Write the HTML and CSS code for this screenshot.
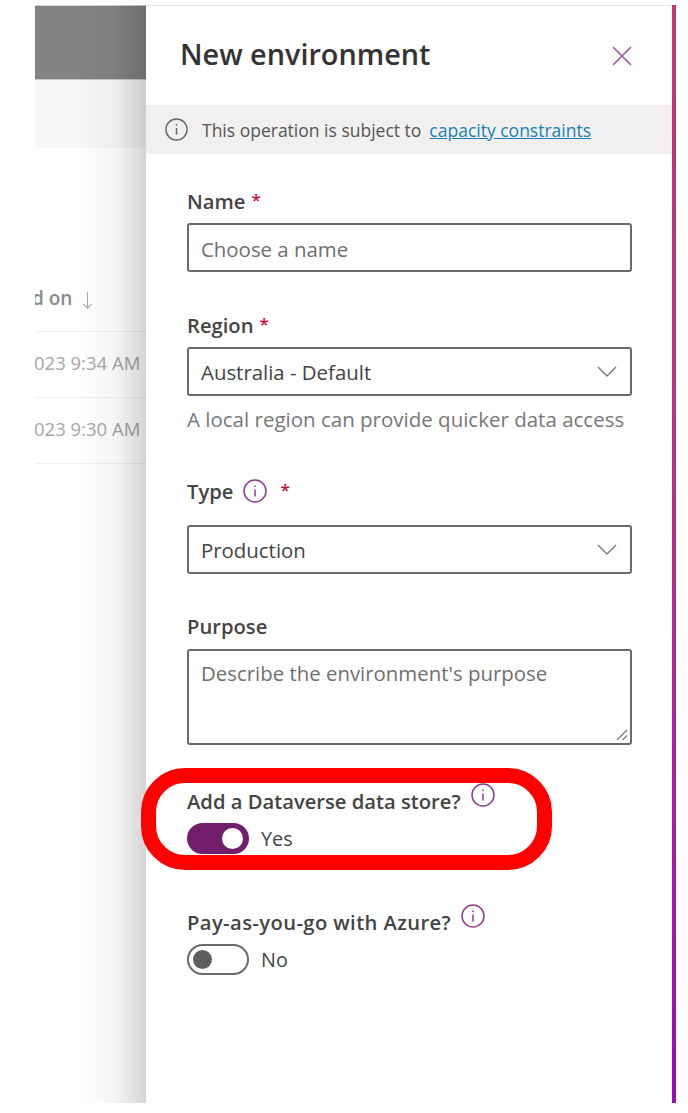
FILE: index.html
```html
<!DOCTYPE html>
<html lang="en">
<head>
<meta charset="utf-8">
<title>New environment</title>
<link rel="stylesheet" href="styles.css">
</head>
<body>
<div class="shot">
  <div class="backdrop">
    <div class="bd-header"></div>
    <div class="bd-band"></div>
    <div class="bd-table">
      <div class="bd-head"><span class="clip-text">d on</span><svg class="arrow" viewBox="0 0 12 20"><path d="M6 1V19M1.5 14.5 6 19 10.5 14.5"/></svg></div>
      <div class="bd-row"><span class="clip-text">023 9:34 AM</span></div>
      <div class="bd-row"><span class="clip-text">023 9:30 AM</span></div>
    </div>
    <div class="bd-shade"></div>
  </div>
  <main class="panel">
    <header class="panel-head">
      <h1 class="title">New environment</h1>
      <svg class="close" viewBox="0 0 20 20" aria-label="Close"><path d="M1 1 19 19M19 1 1 19"/></svg>
    </header>
    <div class="notice">
      <svg class="info info-notice" viewBox="0 0 24 24"><circle cx="12" cy="12" r="11"/><path d="M12 10.5v7M12 6.5v1.6"/></svg>
      <span>This operation is subject to</span>
      <a class="link" href="#">capacity constraints</a>
    </div>
    <form class="form">
      <div class="field field-name">
        <label class="label">Name <span class="req">*</span></label>
        <div class="input placeholder">Choose a name</div>
      </div>
      <div class="field field-region">
        <label class="label">Region <span class="req">*</span></label>
        <div class="input select">Australia - Default
          <svg class="chev" viewBox="0 0 20 11"><path d="M1 1 10 10 19 1"/></svg>
        </div>
        <p class="hint">A local region can provide quicker data access</p>
      </div>
      <div class="field field-type">
        <label class="label label-icon">Type
          <svg class="info info-purple" viewBox="0 0 24 24"><circle cx="12" cy="12" r="11"/><path d="M12 10.5v7M12 6.5v1.6"/></svg>
          <span class="req req-gap">*</span></label>
        <div class="input select">Production
          <svg class="chev" viewBox="0 0 20 11"><path d="M1 1 10 10 19 1"/></svg>
        </div>
      </div>
      <div class="field field-purpose">
        <label class="label">Purpose</label>
        <div class="input textarea placeholder">Describe the environment's purpose
          <svg class="grip" viewBox="0 0 12 12"><path d="M1 11 11 1M6.5 11 11 6.5"/></svg>
        </div>
      </div>
      <div class="field field-store">
        <label class="label label-icon">Add a Dataverse data store?
          <svg class="info info-purple info-raised" viewBox="0 0 24 24"><circle cx="12" cy="12" r="11"/><path d="M12 10.5v7M12 6.5v1.6"/></svg></label>
        <div class="toggle-row">
          <span class="toggle on"><span class="knob"></span></span><span>Yes</span>
        </div>
        <div class="ring"></div>
      </div>
      <div class="field field-azure">
        <label class="label label-icon">Pay-as-you-go with Azure?
          <svg class="info info-purple info-raised" viewBox="0 0 24 24"><circle cx="12" cy="12" r="11"/><path d="M12 10.5v7M12 6.5v1.6"/></svg></label>
        <div class="toggle-row">
          <span class="toggle"><span class="knob"></span></span><span>No</span>
        </div>
      </div>
    </form>
  </main>
  <div class="stripe"></div>
</div>
</body>
</html>
```
FILE: styles.css
```css
* { box-sizing: border-box; }
html, body { margin: 0; padding: 0; background: #fff; }
body { font-family: "Open Sans", "Noto Sans", sans-serif; color: #3b3a39; }
.shot {
  width: 688px; height: 1113px;
  padding: 5px 12px 10px 35px;
  display: flex;
  overflow: hidden;
}
.backdrop {
  width: 111px; flex: none;
  position: relative;
  display: flex; flex-direction: column;
  overflow: hidden;
}
.bd-header { height: 75px; flex: none; background: #848382; border-top: 1px solid #d6d6d6; border-bottom: 1px solid #c9c9c9; }
.bd-band { height: 68px; flex: none; background: #f7f7f7; }
.bd-table { flex: 1; font-size: 18.5px; color: #a6a6a6; }
.bd-head {
  height: 184px; padding-bottom: 20px;
  display: flex; align-items: flex-end;
  border-bottom: 1px solid #efefef;
  white-space: nowrap; color: #8a8a8a;
  font-weight: 600; font-size: 19px;
}
.clip-text { display: inline-block; }
.bd-head .clip-text { margin-left: -3px; }
.arrow { width: 11px; height: 20px; margin: 0 0 1px 10px; fill: none; stroke: #aaa; stroke-width: 1.2; flex: none; }
.bd-row {
  height: 66px; padding-top: 18px;
  border-bottom: 1px solid #efefef;
  white-space: nowrap;
}
.bd-row .clip-text { margin-left: -1px; }
.bd-shade {
  position: absolute; inset: 0;
  background: linear-gradient(90deg, rgba(0,0,0,0) 40%, rgba(0,0,0,.04) 72%, rgba(0,0,0,.17) 100%);
}
.panel {
  width: 526px; flex: none;
  background: #fff;
  border-top: 1px solid #e4e4e4;
  display: flex; flex-direction: column;
}
.panel-head {
  height: 99px; flex: none;
  padding: 0 40px 0 34px;
  display: flex; align-items: center; justify-content: space-between;
}
.title { margin: 0; font-size: 28.8px; font-weight: 600; color: #333; line-height: 1; position: relative; top: -1px; }
.close { width: 20px; height: 20px; fill: none; stroke: #a0559a; stroke-width: 1.6; }
.notice {
  height: 49px; flex: none;
  background: #f1f0ef;
  display: flex; align-items: center;
  padding: 0 19px;
  font-size: 17.5px; color: #555;
}
.link { margin-left: 8px; color: #1a7fb5; text-decoration: underline; }
.info { fill: none; stroke-width: 1.5; flex: none; }
.info-notice { width: 23px; height: 23px; stroke: #666; margin-right: 14px; }
.info-purple { width: 24px; height: 24px; stroke: #8c3f8c; margin-left: 10px; }
.info-raised { position: relative; top: -6px; }
.form { padding: 0 40px 0 41px; display: flex; flex-direction: column; }
.label { display: flex; align-items: center; height: 24px; font-size: 20.2px; font-weight: 600; color: #444; margin-bottom: 10px; gap: 6px; }
.label-icon { gap: 0; }
.req { color: #c4103a; font-weight: 600; font-size: 17px; position: relative; top: -2px; }
.req-gap { margin-left: 13px; }
.input {
  height: 49px;
  border: 2px solid #6a6a6a;
  border-radius: 3px;
  padding: 2px 12px 0;
  display: flex; align-items: center; justify-content: space-between;
  font-size: 20.4px; color: #444;
  position: relative;
}
.select { padding-top: 0; }
.placeholder { color: #6f6f6f; }
.chev { width: 20px; height: 11px; fill: none; stroke: #777; stroke-width: 1.4; margin-right: 1px; }
.hint { margin: 10px 0 0; font-size: 20.5px; color: #777; line-height: 26px; white-space: nowrap; }
.field-name { margin-top: 35px; }
.field-region { margin-top: 41px; }
.field-type { margin-top: 47px; }
.field-type .label { margin-bottom: 22px; }
.field-purpose { margin-top: 40px; }
.field-purpose .label { margin-bottom: 11px; }
.textarea { height: 96px; align-items: flex-start; padding-top: 8px; }
.grip { position: absolute; right: 2px; bottom: 2px; width: 12px; height: 12px; fill: none; stroke: #777; stroke-width: 1.2; }
.field-store { margin-top: 44px; position: relative; }
.field-azure { margin-top: 56px; }
.field-azure .label { letter-spacing: .4px; }
.toggle-row { display: flex; align-items: center; gap: 12px; font-size: 19.8px; color: #444; height: 32px; margin-top: -1px; }
.toggle {
  width: 62px; height: 31px; flex: none;
  border: 2px solid #6a6a6a; border-radius: 16px;
  display: flex; align-items: center;
  padding: 0 4px;
}
.knob { width: 19px; height: 19px; border-radius: 50%; background: #605e5c; }
.toggle.on { background: #711f6d; border-color: #711f6d; justify-content: flex-end; }
.toggle.on .knob { background: #fff; width: 21px; height: 21px; }
.ring {
  position: absolute;
  left: -46px; top: -21px;
  width: 411px; height: 102px;
  border: 15px solid #fe0000;
  border-radius: 44px;
  pointer-events: none;
}
.stripe {
  width: 4px; flex: none;
  background: linear-gradient(180deg, #c13a74 0%, #b52f92 50%, #9a0cb5 100%);
}
```
